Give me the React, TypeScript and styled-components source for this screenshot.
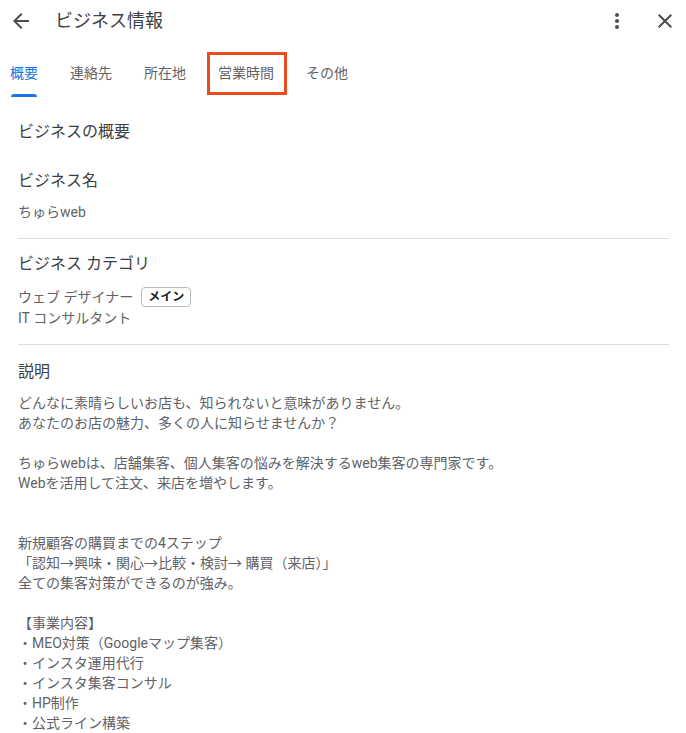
import React from "react";
import styled, { createGlobalStyle } from "styled-components";

const GlobalStyle = createGlobalStyle`
  html, body { margin: 0; padding: 0; background: #ffffff; }
  body { font-family: Roboto, "Noto Sans CJK JP", sans-serif; -webkit-font-smoothing: antialiased; }
  * { box-sizing: border-box; }
`;

const Page = styled.div`
  width: 686px;
  height: 733px;
  overflow: hidden;
  background: #fff;
  display: flex;
  flex-direction: column;
`;

const Header = styled.header`
  display: flex;
  align-items: center;
  height: 24px;
  margin-top: 9px;
  padding: 0 9px;
`;

const IconButton = styled.button`
  width: 24px;
  height: 24px;
  padding: 0;
  border: 0;
  background: none;
  display: flex;
  align-items: center;
  justify-content: center;
  color: #4a4d52;
  cursor: pointer;
`;

const Title = styled.h1`
  margin: 0 0 0 22px;
  flex: 1;
  font-size: 18px;
  font-weight: 400;
  line-height: 24px;
  color: #3c4043;
`;

const Actions = styled.div`
  display: flex;
  gap: 24px;
`;

const TabBar = styled.nav`
  display: flex;
  gap: 32px;
  margin-top: 17px;
  padding-left: 10px;
  height: 47px;
`;

const Tab = styled.div<{ $active?: boolean; $marked?: boolean }>`
  position: relative;
  display: flex;
  align-items: center;
  font-size: 14px;
  line-height: 20px;
  padding-bottom: 1px;
  color: ${(p) => (p.$active ? "#1a73e8" : "#5f6368")};
  &::before {
    content: "";
    display: ${(p) => (p.$active ? "block" : "none")};
    position: absolute;
    left: 1px;
    right: 1px;
    bottom: 0;
    height: 3px;
    border-radius: 3px 3px 0 0;
    background: #1a73e8;
  }
  &::after {
    content: "";
    display: ${(p) => (p.$marked ? "block" : "none")};
    position: absolute;
    left: -11px;
    right: -13px;
    top: 2px;
    bottom: 2px;
    border: 3px solid #ec4a1f;
  }
`;

const Content = styled.main`
  padding: 23px 17px 0 18px;
`;

const PageHeading = styled.h2`
  margin: 0 0 25px;
  font-size: 16px;
  font-weight: 400;
  line-height: 24px;
  color: #3c4043;
`;

const Section = styled.section<{ $divider?: boolean; $after?: number }>`
  padding-bottom: ${(p) => (p.$divider ? "16px" : "0")};
  margin-bottom: ${(p) => p.$after ?? 0}px;
  border-bottom: ${(p) => (p.$divider ? "1px solid #dadce0" : "none")};
`;

const SectionTitle = styled.h3<{ $gap?: number }>`
  margin: 0 0 ${(p) => p.$gap ?? 9}px;
  font-size: 16px;
  font-weight: 400;
  line-height: 24px;
  color: #3c4043;
`;

const Body = styled.div`
  font-size: 14px;
  line-height: 20px;
  color: #5f6368;
  white-space: pre-line;
`;

const CategoryLine = styled.div`
  display: flex;
  align-items: center;
  gap: 8px;
  height: 21px;
`;

const Chip = styled.span`
  display: inline-flex;
  align-items: center;
  justify-content: center;
  height: 20px;
  padding: 0 6px;
  border: 1px solid #b8bbbf;
  border-radius: 4px;
  font-size: 12px;
  font-weight: 700;
  color: #202124;
`;

const BackIcon = () => (
  <svg width="24" height="24" viewBox="0 0 24 24" fill="currentColor">
    <path d="M20 11H7.83l5.59-5.59L12 4l-8 8 8 8 1.41-1.41L7.83 13H20v-2z" />
  </svg>
);

const MoreIcon = () => (
  <svg width="24" height="24" viewBox="0 0 24 24" fill="currentColor">
    <circle cx="12" cy="6" r="2" />
    <circle cx="12" cy="12" r="2" />
    <circle cx="12" cy="18" r="2" />
  </svg>
);

const CloseIcon = () => (
  <svg width="24" height="24" viewBox="0 0 24 24" fill="currentColor">
    <path d="M19 6.41L17.59 5 12 10.59 6.41 5 5 6.41 10.59 12 5 17.59 6.41 19 12 13.41 17.59 19 19 17.59 13.41 12z" />
  </svg>
);

const tabs = [
  { label: "概要", active: true },
  { label: "連絡先" },
  { label: "所在地" },
  { label: "営業時間", marked: true },
  { label: "その他" },
];

const description = `どんなに素晴らしいお店も、知られないと意味がありません。
あなたのお店の魅力、多くの人に知らせませんか？

ちゅらwebは、店舗集客、個人集客の悩みを解決するweb集客の専門家です。
Webを活用して注文、来店を増やします。


新規顧客の購買までの4ステップ
「認知→興味・関心→比較・検討→ 購買（来店）」
全ての集客対策ができるのが強み。

【事業内容】
・MEO対策（Googleマップ集客）
・インスタ運用代行
・インスタ集客コンサル
・HP制作
・公式ライン構築`;

export default function App() {
  return (
    <Page>
      <GlobalStyle />
      <Header>
        <IconButton aria-label="戻る">
          <BackIcon />
        </IconButton>
        <Title>ビジネス情報</Title>
        <Actions>
          <IconButton aria-label="その他">
            <MoreIcon />
          </IconButton>
          <IconButton aria-label="閉じる">
            <CloseIcon />
          </IconButton>
        </Actions>
      </Header>
      <TabBar>
        {tabs.map((t) => (
          <Tab key={t.label} $active={t.active} $marked={t.marked}>
            {t.label}
          </Tab>
        ))}
      </TabBar>
      <Content>
        <PageHeading>ビジネスの概要</PageHeading>
        <Section $divider $after={13}>
          <SectionTitle>ビジネス名</SectionTitle>
          <Body>ちゅらweb</Body>
        </Section>
        <Section $divider $after={15}>
          <SectionTitle $gap={10}>ビジネス カテゴリ</SectionTitle>
          <Body>
            <CategoryLine>
              ウェブ デザイナー<Chip>メイン</Chip>
            </CategoryLine>
            <CategoryLine>IT コンサルタント</CategoryLine>
          </Body>
        </Section>
        <Section>
          <SectionTitle>説明</SectionTitle>
          <Body>{description}</Body>
        </Section>
      </Content>
    </Page>
  );
}
